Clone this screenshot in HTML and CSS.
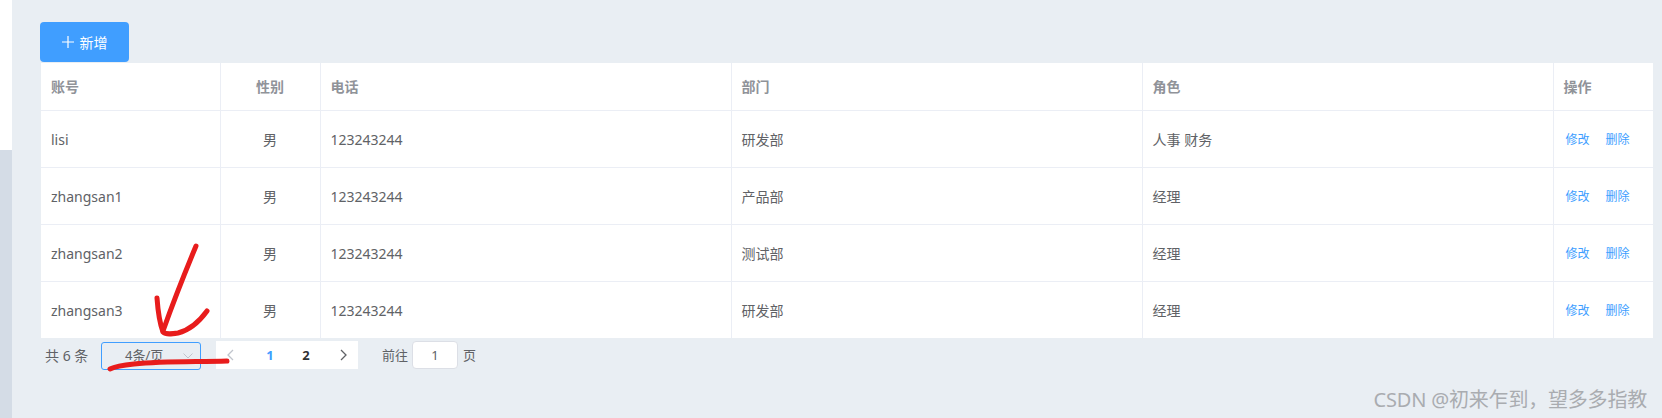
FILE: index.html
```html
<!DOCTYPE html>
<html lang="en">
<head>
  <meta charset="UTF-8" />
  <title>用户列表</title>
  <link rel="stylesheet" href="styles.css">
</head>
<body>
  <div class="layout">
    <div class="sidebar"></div>
    <div class="main">
      <button class="add-btn" type="button">
        <svg class="add-icon" viewBox="0 0 12 12"><path d="M6 0v12M0 6h12" /></svg>
        <span>新增</span>
      </button>

      <table class="user-table">
        <colgroup>
          <col class="col-account"><col class="col-sex"><col class="col-phone">
          <col class="col-dept"><col class="col-role"><col class="col-op">
        </colgroup>
        <thead>
          <tr>
            <th>账号</th><th class="center">性别</th><th>电话</th><th>部门</th><th>角色</th><th>操作</th>
          </tr>
        </thead>
        <tbody>
          <tr>
            <td>lisi</td><td class="center">男</td><td>123243244</td><td>研发部</td><td>人事 财务</td>
            <td class="ops"><a>修改</a><a>删除</a></td>
          </tr>
          <tr>
            <td>zhangsan1</td><td class="center">男</td><td>123243244</td><td>产品部</td><td>经理</td>
            <td class="ops"><a>修改</a><a>删除</a></td>
          </tr>
          <tr>
            <td>zhangsan2</td><td class="center">男</td><td>123243244</td><td>测试部</td><td>经理</td>
            <td class="ops"><a>修改</a><a>删除</a></td>
          </tr>
          <tr>
            <td>zhangsan3</td><td class="center">男</td><td>123243244</td><td>研发部</td><td>经理</td>
            <td class="ops"><a>修改</a><a>删除</a></td>
          </tr>
        </tbody>
      </table>

      <div class="pagination">
        <span class="total">共 6 条</span>
        <div class="size-select">
          <span>4条/页</span>
          <svg class="select-arrow" viewBox="0 0 10 6"><path d="M.5.5 5 5 9.500.5" /></svg>
        </div>
        <div class="pager">
          <svg class="pager-arrow disabled" viewBox="0 0 7 12"><path d="M6 1 1 6l5 5" /></svg>
          <span class="page active">1</span>
          <span class="page">2</span>
          <svg class="pager-arrow next" viewBox="0 0 7 12"><path d="M1 1l5 5-5 5" /></svg>
        </div>
        <div class="jump">
          <span>前往</span>
          <div class="jump-input">1</div>
          <span>页</span>
        </div>
      </div>
    </div>
  </div>

  <!-- hand drawn red marks on top of the screenshot -->
  <svg class="marks" viewBox="0 0 1662 418">
    <path d="M196 246C186 270 174 300 163 331" />
    <path d="M157 298C158 312 160 324 163 332C166 335 172 334 178 333C190 330 199 322 207 311" />
    <path d="M110 369C116 366 124 365 134 364C164 361 196 362 227 361" />
  </svg>

  <div class="watermark">CSDN @初来乍到，望多多指教</div>
</body>
</html>
```

FILE: styles.css
```css
* {
  box-sizing: border-box;
}
html, body {
  margin: 0;
  height: 100%;
  overflow: hidden;
}
body {
  position: relative;
  background: #e9eef3;
  font-family: "Noto Sans", "Noto Sans CJK SC", sans-serif;
  font-size: 14px;
  color: #606266;
}
.layout {
  display: flex;
  height: 418px;
}
.sidebar {
  width: 12px;
  flex: none;
  background: linear-gradient(to bottom, #ffffff 150px, #d4dce6 150px);
}
.main {
  flex: 1;
  padding: 22px 9px 0 28px;
}
.add-btn {
  display: flex;
  align-items: center;
  justify-content: center;
  gap: 6px;
  width: 89px;
  height: 40px;
  padding: 0;
  background: #409eff;
  color: #fff;
  border: none;
  border-radius: 4px;
  font-family: inherit;
  font-size: 14px;
}
.add-icon {
  width: 12px;
  height: 12px;
  fill: none;
  stroke: #fff;
  stroke-width: 1.2;
}
.user-table {
  width: 1612px;
  margin: 1px 0 0 1px;
  border-collapse: collapse;
  table-layout: fixed;
  background: #fff;
}
.col-account { width: 179px; }
.col-sex { width: 100px; }
.col-phone { width: 411px; }
.col-dept { width: 411px; }
.col-role { width: 411px; }
.col-op { width: 100px; }
.user-table th,
.user-table td {
  padding: 0 10px;
  text-align: left;
  border-bottom: 1px solid #ebeef5;
  border-right: 1px solid #ebeef5;
}
.user-table th:last-child,
.user-table td:last-child {
  border-right: none;
}
.user-table tr:last-child td {
  border-bottom: none;
}
.user-table th {
  height: 47px;
  font-size: 14px;
  font-weight: 700;
  color: #909399;
}
.user-table td {
  height: 57px;
  padding-top: 1px;
}
.user-table .center {
  text-align: center;
}
.user-table .ops {
  padding: 0 0 0 12px;
  font-size: 12px;
  white-space: nowrap;
}
.ops a {
  color: #409eff;
  margin-right: 16px;
}
.pagination {
  display: flex;
  align-items: flex-start;
  height: 32px;
  margin-top: 3px;
  font-size: 13px;
}
.total {
  margin: 4px 0 0 5px;
  width: 56px;
  flex: none;
  font-size: 14px;
}
.size-select {
  display: flex;
  align-items: center;
  justify-content: space-between;
  width: 100px;
  height: 28px;
  margin-top: 1px;
  padding: 0 7px 3px 23px;
  border: 1px solid #409eff;
  border-radius: 3px;
}
.select-arrow {
  width: 10px;
  height: 6px;
  margin-top: 3px;
  fill: none;
  stroke: #c0c4cc;
}
.pager {
  display: flex;
  align-items: center;
  width: 142px;
  height: 28px;
  margin-left: 15px;
  background: #fff;
  font-weight: 700;
  color: #303133;
}
.pager-arrow {
  width: 7px;
  height: 12px;
  flex: none;
  margin: 0 18px 0 11px;
  fill: none;
  stroke: #c0c4cc;
  stroke-width: 1.3;
}
.pager-arrow.next {
  margin: 0 0 0 16px;
  stroke: #606266;
}
.page {
  width: 36px;
  text-align: center;
}
.page.active {
  color: #409eff;
}
.jump {
  display: flex;
  align-items: flex-start;
  margin-left: 24px;
}
.jump span {
  margin-top: 4px;
}
.jump-input {
  width: 46px;
  height: 28px;
  margin: 0 5px 0 4px;
  background: #fff;
  border: 1px solid #dcdfe6;
  border-radius: 4px;
  text-align: center;
  line-height: 26px;
}
.marks {
  position: absolute;
  left: 0;
  top: 0;
  width: 1662px;
  height: 418px;
  fill: none;
  stroke: #e81c1c;
  stroke-width: 5;
  stroke-linecap: round;
  stroke-linejoin: round;
  pointer-events: none;
}
.watermark {
  position: absolute;
  right: 15px;
  top: 386px;
  font-size: 20px;
  line-height: 28px;
  letter-spacing: -0.2px;
  color: #a9acb0;
  white-space: nowrap;
}
```
